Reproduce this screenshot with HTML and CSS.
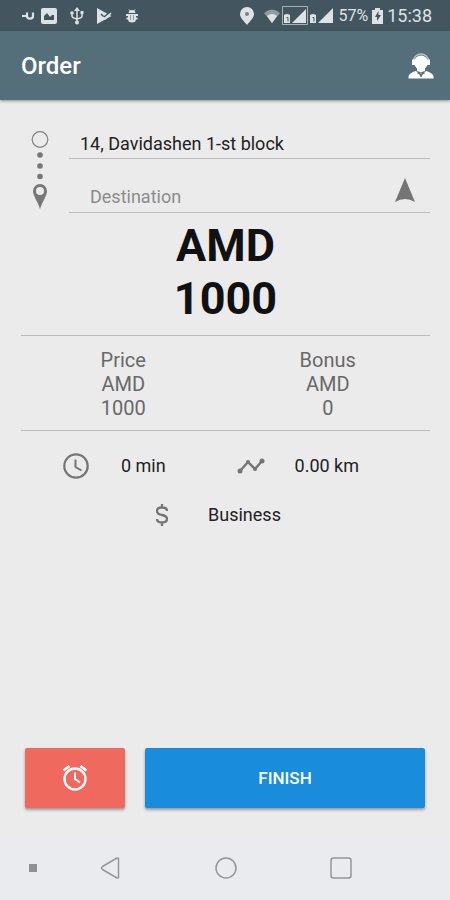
FILE: index.html
```html
<!DOCTYPE html>
<html lang="en">
<head>
<meta charset="utf-8">
<meta name="viewport" content="width=device-width, initial-scale=1">
<title>Order</title>
<link rel="stylesheet" href="styles.css">
</head>
<body>
<div class="status-bar">
  <div class="notifications">
    <svg width="14" height="16" viewBox="0 0 14 16" fill="none" stroke="currentColor"><path d="M0 8h4" stroke-width="2"/><path d="M5 4.500v3.500q0 2.700 3 2.700t3-2.700V4.500" stroke-width="2.200"/></svg>
    <svg width="16" height="16" viewBox="0 0 16 16"><path fill="currentColor" fill-rule="evenodd" d="M2 0h12q2 0 2 2v12q0 2-2 2H2q-2 0-2-2V2q0-2 2-2zm1 12h10V7h-2L9 9 6 5 3 8z"/></svg>
    <svg class="usb" width="14" height="18" viewBox="0 0 14 18" fill="none" stroke="currentColor" stroke-width="1.500"><path d="M7 2v13M2 6v3q0 2 5 3M12 5v4q0 2-5 3"/><path d="M7 0l3 4H4z" fill="currentColor" stroke="none"/><circle cx="7" cy="15.500" r="2" fill="currentColor" stroke="none"/><circle cx="2" cy="6" r="1.800" fill="currentColor" stroke="none"/><path d="M10.500 4h3v3h-3z" fill="currentColor" stroke="none"/></svg>
    <svg class="play" width="15" height="16" viewBox="0 0 15 16"><path fill="currentColor" d="M0 0l14.500 8L0 16z"/><path d="M4 6l3 3 7-6" fill="none" stroke="#43565f" stroke-width="1.500"/><path d="M6 9l2 2 6-6" fill="none" stroke="currentColor" stroke-width="1.500"/></svg>
    <svg class="bug" width="14" height="16" viewBox="0 0 14 16"><path fill="currentColor" d="M3.500 5q.500-3 3.500-3t3.500 3zM3 6h8v5q0 3.500-4 3.500t-4-3.500z"/><path d="M1 7h12M1.500 10.500h11" stroke="currentColor" stroke-width="2"/><path d="M4 1.500l1.500 2M10 1.500l-1.500 2" stroke="currentColor"/><path d="M5.500 7v5M8.500 7v5" stroke="#8d9aa1"/></svg>
  </div>
  <div class="system">
    <svg width="14" height="18" viewBox="0 0 14 18"><path fill="currentColor" d="M7 0a7 7 0 0 0-7 7c0 4 4 7 7 11 3-4 7-7 7-11a7 7 0 0 0-7-7z"/><circle cx="7" cy="7" r="2" fill="#73838b"/></svg>
    <svg class="wifi" width="16" height="14" viewBox="0 0 16 14"><path fill="currentColor" opacity=".5" d="M0 4q8-7 16 0l-8 10z"/><path fill="currentColor" d="M3 7q5-4 10 0l-5 7z"/></svg>
    <svg width="26" height="20" viewBox="0 0 26 20"><path d="M.500.500h25v18H.500z" fill="none" stroke="currentColor" opacity=".65"/><path fill="currentColor" d="M10 17L24 3v14zM2 9q3-2 6 0v8H2z"/><path d="M4.500 11.500H6v4" fill="none" stroke="#43565f"/></svg>
    <svg class="signal" width="24" height="20" viewBox="0 0 24 20"><path fill="currentColor" d="M8 17L23 2v15zM0 9q3-2 6 0v8H0z"/><path d="M2.500 11.500H4v4" fill="none" stroke="#43565f"/></svg>
    <span class="battery-level">57%</span>
    <svg width="11" height="16" viewBox="0 0 11 16"><path fill="currentColor" d="M3 0h5v2h3v14H0V2h3z"/><path fill="#43565f" d="M6.500 3L3 9h2v4l4-6H6.500z"/></svg>
    <time class="clock">15:38</time>
  </div>
</div>

<header class="app-bar">
  <h1 class="title">Order</h1>
  <button class="icon-button" type="button" aria-label="Support">
    <svg width="26" height="28" viewBox="0 0 26 28"><path d="M5.500 10V9a7.500 7 0 0 1 15 0v1" fill="none" stroke="#b5c1c6" stroke-width="1.500"/><circle cx="13" cy="10.500" r="7" fill="#fff"/><path fill="#fff" d="M4 7.500h3v5.500H4zM19 7.500h3v5.500h-3zM9 15h8v4l-4 3-4-3zM.500 26.500v-2q0-3 7-5.500l2 1 3.500 5 3.500-5 2-1q7 2.500 7 5.500v2z"/><path d="M9.500 19l3.500 1.500 3.500-1.500v3l-3-1v4h-1v-4l-3 1z" fill="#546e7a"/></svg>
  </button>
</header>

<main class="order">
  <section class="route">
    <svg class="route-line" width="18" height="80" viewBox="0 0 18 80"><circle cx="9" cy="9.500" r="7.800" fill="none" stroke="#858585" stroke-width="1.200"/><g fill="#777"><circle cx="9" cy="25" r="2.800"/><circle cx="9" cy="36" r="2.800"/><circle cx="9" cy="46.500" r="2.800"/><path fill-rule="evenodd" d="M9 54a7 7 0 0 0-7 7c0 5 5 11 7 18 2-7 7-13 7-18a7 7 0 0 0-7-7zm0 3a4 4 0 1 1 0 8 4 4 0 0 1 0-8z"/></g></svg>
    <div class="fields">
      <div class="field">
        <input class="field-input" type="text" value="14, Davidashen 1-st block" aria-label="Pickup address">
      </div>
      <div class="field field-destination">
        <input class="field-input" type="text" placeholder="Destination" aria-label="Destination">
        <button class="icon-button" type="button" aria-label="Navigate">
          <svg width="20" height="24" viewBox="0 0 20 24"><path fill="#757575" d="M10 0l10 24q-10-6-20 0z"/></svg>
        </button>
      </div>
    </div>
  </section>

  <p class="total">AMD<br>1000</p>

  <dl class="breakdown">
    <div><dt>Price</dt><dd>AMD<br>1000</dd></div>
    <div><dt>Bonus</dt><dd>AMD<br>0</dd></div>
  </dl>

  <div class="trip">
    <div class="metric">
      <svg width="26" height="26" viewBox="0 0 26 26" fill="none" stroke="#757575"><circle cx="13" cy="13" r="11.700" stroke-width="2.200"/><path d="M12.500 6.500V14l6 3.500" stroke-width="2"/></svg>
      <span>0 min</span>
    </div>
    <div class="metric metric-distance">
      <svg width="28" height="16" viewBox="0 0 28 16"><path d="M3 13l8-9 7 7 7-8" fill="none" stroke="#757575" stroke-width="2.500"/><g fill="#757575"><circle cx="3" cy="13" r="2.500"/><circle cx="11" cy="4" r="2"/><circle cx="18" cy="11" r="2"/><circle cx="25" cy="3" r="2.500"/></g></svg>
      <span>0.00 km</span>
    </div>
  </div>
  <div class="tariff">
    <svg width="12" height="22" viewBox="0 0 12 22" fill="none" stroke="#757575" stroke-width="2.300"><path d="M11 7q0-3.500-5-3.500T1 7q0 3 5 4t5 4q0 3.500-5 3.500T1 15M6 0v4M6 18v4"/></svg>
    <span>Business</span>
  </div>

  <div class="actions">
    <button class="action action-wait" type="button" aria-label="Waiting">
      <svg width="26" height="28" viewBox="0 0 26 28" fill="none" stroke="#fff"><circle cx="13" cy="15" r="10.500" stroke-width="2.400"/><path d="M13 8.500V15l5 3.500" stroke-width="2"/><path d="M1.500 6.500l6-4.500M24.500 6.500l-6-4.500" stroke-width="2.800"/></svg>
    </button>
    <button class="action action-finish" type="button">FINISH</button>
  </div>
</main>

<nav class="nav-bar" aria-label="System">
  <span class="nav-dot"></span>
  <button class="nav-button" type="button" aria-label="Back"><svg width="22" height="24" viewBox="0 0 22 24"><path d="M17 2L2.500 10.500q-2 1.500 0 3L17 22q1.500.500 1.500-1V3q0-1.500-1.500-1z" fill="none" stroke="#959699" stroke-width="1.500"/></svg></button>
  <button class="nav-button" type="button" aria-label="Home"><svg width="22" height="24" viewBox="0 0 22 24"><circle cx="11" cy="12" r="10" fill="none" stroke="#959699" stroke-width="1.500"/></svg></button>
  <button class="nav-button" type="button" aria-label="Recent apps"><svg width="22" height="24" viewBox="0 0 22 24"><rect x="1" y="2" width="20" height="20" rx="2.500" fill="none" stroke="#959699" stroke-width="1.500"/></svg></button>
</nav>
</body>
</html>
```
FILE: styles.css
```css
* {
  box-sizing: border-box;
}

body {
  display: flex;
  flex-direction: column;
  min-height: 100vh;
  margin: 0;
  background: #ebebeb;
  color: #222;
  font-family: Roboto, sans-serif;
  font-size: 18px;
  line-height: 24px;
}

svg {
  display: block;
  flex: none;
}

button {
  border: 0;
  padding: 0;
  background: none;
  color: inherit;
  font: inherit;
}

.status-bar {
  display: flex;
  align-items: center;
  justify-content: space-between;
  height: 31px;
  padding: 0 18px 0 22px;
  background: #43565f;
  color: #dce2e5;
}

.notifications,
.system {
  display: flex;
  align-items: center;
}

.notifications {
  gap: 13px;
}

.notifications svg:first-child {
  margin-right: -8px;
}

.system {
  gap: 4px;
}

.wifi {
  margin: 0 -2px 0 6px;
}

.signal {
  margin-left: -2px;
}

.battery-level {
  font-size: 16px;
}

.clock {
  font-size: 18px;
}

.app-bar {
  display: flex;
  align-items: center;
  justify-content: space-between;
  height: 69px;
  padding: 0 16px 0 21px;
  background: #546e7a;
  box-shadow: 0 1px 3px rgba(0, 0, 0, 0.4);
  color: #fff;
}

.title {
  margin: 0;
  font-size: 24px;
  font-weight: 500;
}

.order {
  display: flex;
  flex: 1;
  flex-direction: column;
  padding: 30px 20px 28px 21px;
}

.route {
  display: flex;
  gap: 20px;
  padding-left: 10px;
}

.fields {
  flex: 1;
  min-width: 0;
}

.field {
  display: flex;
  align-items: center;
  height: 29px;
  padding: 0 16px 0 11px;
  border-bottom: 1px solid #bdbdbd;
}

.field-destination {
  height: 54px;
  padding: 8px 15px 0 21px;
}

.field-input {
  flex: 1;
  min-width: 0;
  border: 0;
  padding: 0;
  outline: 0;
  background: none;
  color: #222;
  font: inherit;
}

.field-destination .field-input {
  padding-top: 14px;
}

.field-input::placeholder {
  color: #8c8c8c;
  opacity: 1;
}

.total {
  margin: 0;
  padding: 6px 0 10px;
  border-bottom: 1px solid #bdbdbd;
  color: #111;
  font-size: 45px;
  font-weight: 700;
  line-height: 53px;
  text-align: center;
}

.breakdown {
  display: grid;
  grid-template-columns: 1fr 1fr;
  margin: 0;
  padding: 12px 0 10px;
  border-bottom: 1px solid #bdbdbd;
  color: #686868;
  font-size: 20px;
  text-align: center;
}

.breakdown dd {
  margin: 0;
}

.trip {
  display: grid;
  grid-template-columns: 1fr 1fr;
  padding: 22px 0 12px;
}

.metric,
.tariff {
  display: flex;
  align-items: center;
  justify-content: center;
}

.metric {
  gap: 32px;
  padding-right: 18px;
}

.metric-distance {
  gap: 30px;
  padding-right: 60px;
}

.tariff {
  gap: 40px;
  padding: 12px 14px 0 0;
}

.actions {
  display: grid;
  grid-template-columns: 100px 1fr;
  gap: 20px;
  margin-top: auto;
  padding: 0 5px 0 4px;
}

.action {
  display: flex;
  align-items: center;
  justify-content: center;
  height: 60px;
  border-radius: 2px;
  box-shadow: 0 2px 3px rgba(0, 0, 0, 0.35);
  color: #fff;
  font-size: 17px;
  font-weight: 500;
}

.action-wait {
  background: #f0695f;
}

.action-finish {
  background: #1a8cdc;
}

.nav-bar {
  display: grid;
  grid-template-columns: 53px repeat(3, 1fr);
  align-items: center;
  justify-items: center;
  height: 64px;
  padding-right: 52px;
  background: #e9ebee;
}

.nav-dot {
  width: 8px;
  height: 8px;
  margin-left: 12px;
  background: #8e9093;
}
```
